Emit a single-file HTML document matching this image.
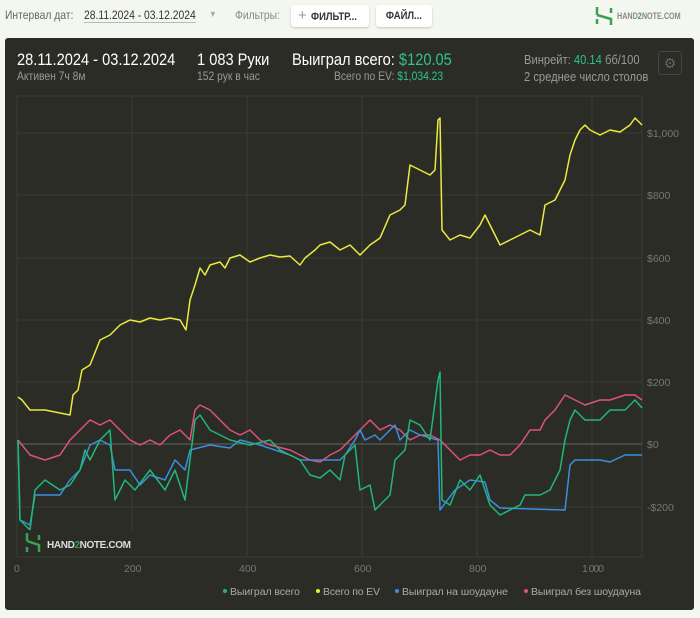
<!DOCTYPE html>
<html><head><meta charset="utf-8"><style>
body{margin:0;width:700px;height:618px;background:#f4f7f0;font-family:"Liberation Sans",sans-serif;position:relative;overflow:hidden}
.t{position:absolute;white-space:nowrap;transform:scaleX(.86);transform-origin:0 0}
.btn{position:absolute;top:5px;height:22px;background:#fff;border-radius:3px;box-shadow:0 1px 2px rgba(0,0,0,.2);font-size:11px;color:#333;line-height:22px;font-weight:bold}
#p{position:absolute;left:5px;top:38px;width:689px;height:572px;background:#2b2c26;border-radius:3px}
.g{color:#2dc58a}
svg{position:absolute}
</style></head><body>
<div class="t" style="left:5px;top:8px;font-size:12px;color:#666">Интервал дат:</div>
<div class="t" style="left:84px;top:8px;font-size:12px;color:#333;border-bottom:1px solid #bbb">28.11.2024 - 03.12.2024</div>
<div class="t" style="left:209px;top:9px;font-size:9px;color:#aaa">▼</div>
<div class="t" style="left:235px;top:8px;font-size:12px;color:#888">Фильтры:</div>
<div class="btn" style="left:291px;width:78px"><span style="color:#999;font-size:15px;font-weight:normal;margin:0 4px 0 7px">+</span><span style="display:inline-block;transform:scaleX(.86);transform-origin:0 0">ФИЛЬТР...</span></div>
<div class="btn" style="left:376px;width:56px;text-align:center"><span style="display:inline-block;transform:scaleX(.86)">ФАЙЛ...</span></div>
<svg style="left:594px;top:6px" width="20" height="20"><path d="M3 1v8M3 9l14 4M17 12v7M3 13v5M17 2v5" stroke="#3aa055" stroke-width="2.5" fill="none"/></svg>
<div class="t" style="left:617px;top:11px;font-size:9px;color:#888;font-weight:bold;transform:scaleX(.8)">HAND<span style="color:#3aa055">2</span>NOTE.COM</div>
<div id="p"></div>
<div class="t" style="left:17px;top:50px;font-size:17px;color:#fff">28.11.2024 - 03.12.2024</div>
<div class="t" style="left:17px;top:69px;font-size:12px;color:#999">Активен 7ч 8м</div>
<div class="t" style="left:197px;top:50px;font-size:17px;color:#fff">1 083 Руки</div>
<div class="t" style="left:197px;top:69px;font-size:12px;color:#999">152 рук в час</div>
<div class="t" style="left:292px;top:50px;font-size:17px;color:#fff">Выиграл всего: <span class="g">$120.05</span></div>
<div class="t" style="left:334px;top:69px;font-size:12px;color:#999">Всего по EV: <span class="g">$1,034.23</span></div>
<div class="t" style="left:524px;top:52px;font-size:13px;color:#999">Винрейт: <span class="g">40.14</span> бб/100</div>
<div class="t" style="left:524px;top:69px;font-size:13px;color:#999">2 среднее число столов</div>
<div style="position:absolute;left:658px;top:51px;width:22px;height:22px;border:1px solid #444;border-radius:3px;color:#666;font-size:14px;text-align:center;line-height:22px">⚙</div>
<svg style="left:0;top:0" width="700" height="618">
<g stroke="#3a3b35" stroke-width="1">
<path d="M17 96H642M17 133H642M17 195H642M17 258H642M17 320H642M17 382H642M17 507H642M17 557H642M17 96V557M132 96V557M247 96V557M362 96V557M477 96V557M592 96V557M642 96V557"/>
</g>
<path d="M17 444H642" stroke="#666" stroke-width="1"/>
<g font-size="10.5" fill="#777" font-family="Liberation Sans">
<text x="647" y="137" textLength="32">$1,000</text><text x="647" y="199">$800</text><text x="647" y="262">$600</text><text x="647" y="324">$400</text><text x="647" y="386">$200</text><text x="647" y="448">$0</text><text x="647" y="511">-$200</text>
<text x="14" y="572">0</text><text x="124" y="572">200</text><text x="239" y="572">400</text><text x="354" y="572">600</text><text x="469" y="572">800</text><text x="582" y="572" textLength="22">1 000</text>
</g>
<g fill="none" stroke-width="1.5" stroke-linejoin="round">
<polyline stroke="#e0507e" points="18,440 22,445 30,455 45,460 60,455 70,440 80,430 90,420 100,425 110,420 120,430 130,440 140,445 150,440 160,445 170,435 180,430 190,440 195,410 200,405 210,410 220,420 230,430 240,435 250,430 260,440 270,445 290,450 300,455 310,460 320,462 330,455 340,450 350,440 360,430 370,420 380,430 390,425 400,430 410,440 420,435 430,435 440,440 450,450 460,460 470,455 480,455 490,450 500,455 510,455 520,445 530,430 540,430 545,420 555,410 565,395 575,400 585,405 600,400 610,400 625,395 635,395 642,400"/>
<polyline stroke="#3b8fe0" points="18,440 20,520 30,525 35,495 60,495 70,480 80,470 90,445 100,440 110,445 115,470 130,470 140,485 150,475 165,480 175,460 185,470 190,450 210,445 230,448 240,440 260,445 275,450 290,455 300,460 340,460 345,455 355,440 360,430 365,440 375,435 380,440 395,425 400,440 410,430 420,435 438,440 440,510 455,490 470,480 485,482 490,500 500,508 565,510 570,465 575,460 600,460 610,462 625,455 642,455"/>
<polyline stroke="#1fb877" points="18,440 20,520 30,530 35,490 45,480 60,490 70,485 80,470 85,450 90,460 100,440 110,430 115,500 125,480 135,490 150,470 165,490 175,470 185,500 190,460 195,420 200,415 210,430 230,440 250,445 270,440 280,450 300,460 310,475 320,478 330,470 340,480 345,455 355,445 360,490 370,485 375,510 380,505 390,495 395,460 400,455 405,450 410,420 420,425 430,440 438,380 440,372 442,500 450,505 460,480 470,490 480,475 490,505 500,515 510,510 520,505 525,495 540,495 550,490 560,470 565,440 570,420 575,410 585,420 600,420 610,410 625,410 635,400 642,408"/>
<polyline stroke="#eaea40" points="18,397 22,400 30,410 45,410 60,413 70,415 73,395 78,390 82,370 90,365 100,340 110,335 120,325 130,320 140,322 150,318 160,320 170,318 180,320 186,330 190,300 195,285 200,268 205,275 210,265 220,262 225,268 230,258 240,255 250,262 260,258 270,255 280,257 290,256 300,265 305,258 315,250 320,245 330,242 340,250 350,245 360,255 370,245 380,238 390,215 400,210 405,205 410,165 420,170 430,175 435,170 438,120 440,118 442,230 450,240 460,235 470,238 480,225 485,215 490,225 500,245 510,240 520,235 530,230 540,235 545,205 555,200 565,180 570,155 575,140 580,130 585,125 590,130 600,135 610,130 620,132 630,125 635,118 642,125"/>
</g>
<rect x="22" y="530" width="112" height="26" fill="#2b2c26" opacity=".9"/>
<path d="M27 533v8M27 541l12 4M39 544v8M27 547v5M39 535v5" stroke="#3aa055" stroke-width="2.5" fill="none"/>
<text x="47" y="548" font-size="10" font-weight="bold" fill="#ddd" font-family="Liberation Sans" textLength="84">HAND<tspan fill="#3aa055">2</tspan>NOTE.COM</text>
<g font-size="10.5" fill="#aaa" font-family="Liberation Sans">
<circle cx="225" cy="591" r="2" fill="#1fb877"/><text x="230" y="595" textLength="70">Выиграл всего</text>
<circle cx="318" cy="591" r="2" fill="#eaea40"/><text x="323" y="595" textLength="57">Всего по EV</text>
<circle cx="397" cy="591" r="2" fill="#3b8fe0"/><text x="402" y="595" textLength="106">Выиграл на шоудауне</text>
<circle cx="526" cy="591" r="2" fill="#e0507e"/><text x="531" y="595" textLength="110">Выиграл без шоудауна</text>
</g>
</svg>
</body></html>
